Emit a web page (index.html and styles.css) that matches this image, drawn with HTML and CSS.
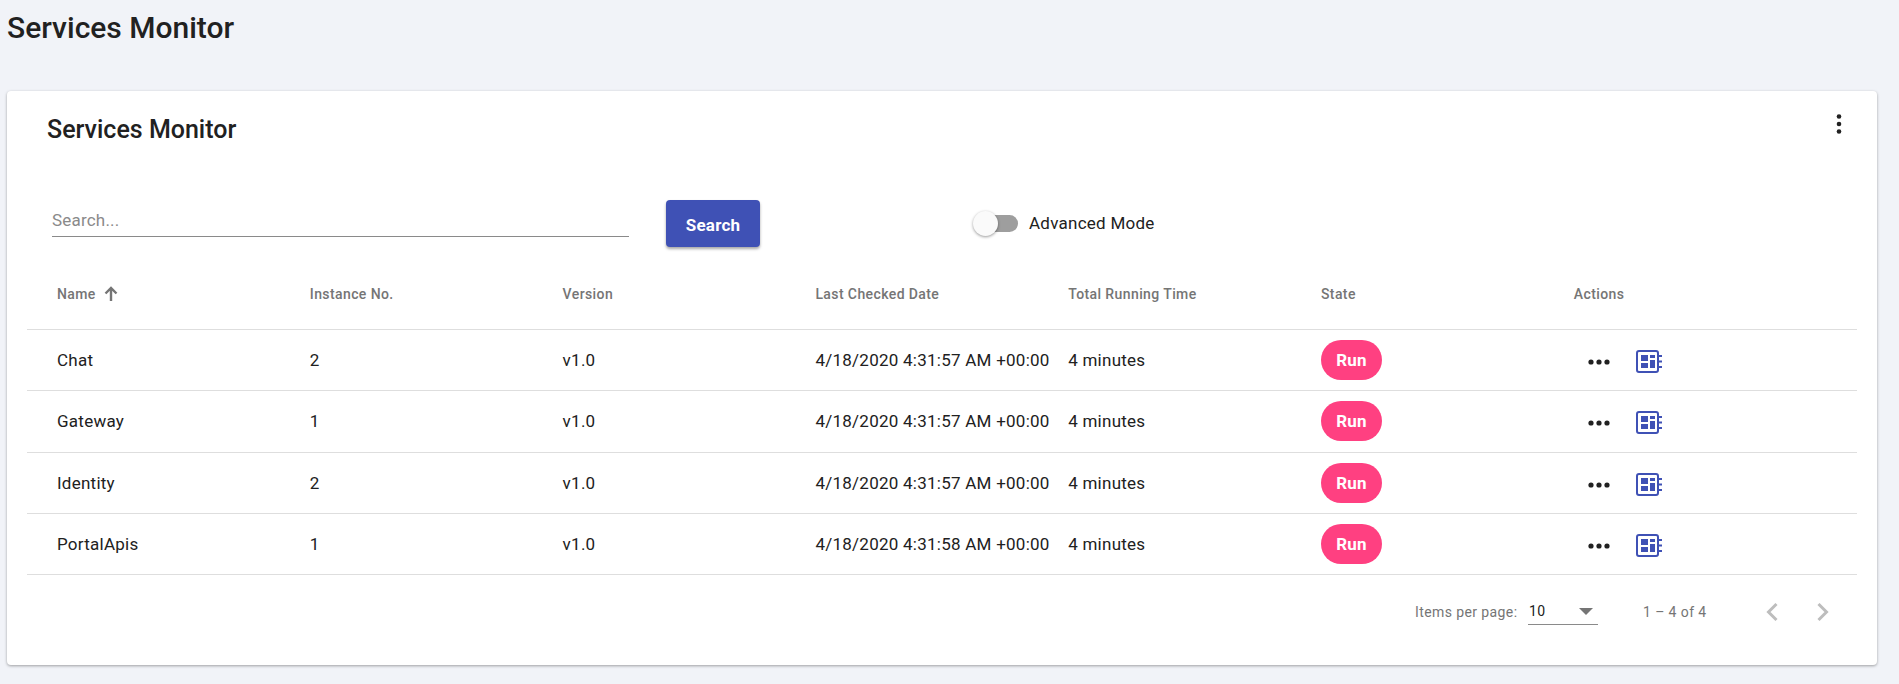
FILE: index.html
```html
<!DOCTYPE html>
<html lang="en">
<head>
    <meta charset="UTF-8">
    <meta name="viewport" content="width=device-width, initial-scale=1.0">
    <title>Services Monitor</title>
    <link rel="stylesheet" href="styles.css">
</head>
<body>
    <h1 class="page-title">Services Monitor</h1>
    <div class="card">
        <div class="card-head">
            <h2 class="card-title">Services Monitor</h2>
            <svg class="kebab" width="6" height="20" viewBox="0 0 6 20"><circle cx="3" cy="2.5" r="2.3"/><circle cx="3" cy="10" r="2.3"/><circle cx="3" cy="17.5" r="2.3"/></svg>
        </div>
        <div class="filters">
            <div class="search-box"><span class="placeholder">Search...</span></div>
            <button class="search-btn">Search</button>
            <div class="toggle">
                <span class="track"><span class="thumb"></span></span>
                <span class="toggle-label">Advanced Mode</span>
            </div>
        </div>
        <div class="table">
            <div class="row head">
                <div class="name-head">Name
                    <svg width="18" height="18" viewBox="0 0 18 18"><path d="M9 16V3M3.500 8.500 9 3l5.500 5.500" fill="none" stroke="#757575" stroke-width="2.400"/></svg>
                </div>
                <div>Instance No.</div>
                <div>Version</div>
                <div>Last Checked Date</div>
                <div>Total Running Time</div>
                <div>State</div>
                <div>Actions</div>
            </div>
            <div class="row">
                <div>Chat</div><div>2</div><div>v1.0</div><div>4/18/2020 4:31:57 AM +00:00</div><div>4 minutes</div>
                <div><button class="run">Run</button></div>
                <div class="actions">
                    <svg class="dots" width="22" height="6" viewBox="0 0 22 6"><circle cx="3" cy="3" r="2.6"/><circle cx="11" cy="3" r="2.6"/><circle cx="19" cy="3" r="2.6"/></svg>
                    <svg class="board" width="26" height="24" viewBox="0 0 26 24"><rect x="1" y="1" width="21" height="21" rx="2" fill="none" stroke="#3f51b5" stroke-width="2"/><path d="M23 5h3v2h-3zM23 10.500h3v2h-3zM23 16h3v2h-3zM5 5h7v6H5zM14 5h5v3h-5zM5 13h7v5H5zM14 10h5v8h-5z" fill="#3f51b5"/></svg>
                </div>
            </div>
            <div class="row">
                <div>Gateway</div><div>1</div><div>v1.0</div><div>4/18/2020 4:31:57 AM +00:00</div><div>4 minutes</div>
                <div><button class="run">Run</button></div>
                <div class="actions">
                    <svg class="dots" width="22" height="6" viewBox="0 0 22 6"><circle cx="3" cy="3" r="2.6"/><circle cx="11" cy="3" r="2.6"/><circle cx="19" cy="3" r="2.6"/></svg>
                    <svg class="board" width="26" height="24" viewBox="0 0 26 24"><rect x="1" y="1" width="21" height="21" rx="2" fill="none" stroke="#3f51b5" stroke-width="2"/><path d="M23 5h3v2h-3zM23 10.500h3v2h-3zM23 16h3v2h-3zM5 5h7v6H5zM14 5h5v3h-5zM5 13h7v5H5zM14 10h5v8h-5z" fill="#3f51b5"/></svg>
                </div>
            </div>
            <div class="row">
                <div>Identity</div><div>2</div><div>v1.0</div><div>4/18/2020 4:31:57 AM +00:00</div><div>4 minutes</div>
                <div><button class="run">Run</button></div>
                <div class="actions">
                    <svg class="dots" width="22" height="6" viewBox="0 0 22 6"><circle cx="3" cy="3" r="2.6"/><circle cx="11" cy="3" r="2.6"/><circle cx="19" cy="3" r="2.6"/></svg>
                    <svg class="board" width="26" height="24" viewBox="0 0 26 24"><rect x="1" y="1" width="21" height="21" rx="2" fill="none" stroke="#3f51b5" stroke-width="2"/><path d="M23 5h3v2h-3zM23 10.500h3v2h-3zM23 16h3v2h-3zM5 5h7v6H5zM14 5h5v3h-5zM5 13h7v5H5zM14 10h5v8h-5z" fill="#3f51b5"/></svg>
                </div>
            </div>
            <div class="row">
                <div>PortalApis</div><div>1</div><div>v1.0</div><div>4/18/2020 4:31:58 AM +00:00</div><div>4 minutes</div>
                <div><button class="run">Run</button></div>
                <div class="actions">
                    <svg class="dots" width="22" height="6" viewBox="0 0 22 6"><circle cx="3" cy="3" r="2.6"/><circle cx="11" cy="3" r="2.6"/><circle cx="19" cy="3" r="2.6"/></svg>
                    <svg class="board" width="26" height="24" viewBox="0 0 26 24"><rect x="1" y="1" width="21" height="21" rx="2" fill="none" stroke="#3f51b5" stroke-width="2"/><path d="M23 5h3v2h-3zM23 10.500h3v2h-3zM23 16h3v2h-3zM5 5h7v6H5zM14 5h5v3h-5zM5 13h7v5H5zM14 10h5v8h-5z" fill="#3f51b5"/></svg>
                </div>
            </div>
        </div>
        <div class="pager">
            <span class="per-page">Items per page:</span>
            <div class="page-select"><span>10</span><span class="arrow"></span></div>
            <span class="range">1 – 4 of 4</span>
            <svg class="chev" width="14" height="20" viewBox="0 0 14 20"><path d="M11.500 2 3.500 10l8 8" fill="none" stroke="#bdbdbd" stroke-width="3"/></svg>
            <svg class="chev next" width="14" height="20" viewBox="0 0 14 20"><path d="M2.500 2l8 8-8 8" fill="none" stroke="#bdbdbd" stroke-width="3"/></svg>
        </div>
    </div>
</body>
</html>
```

FILE: styles.css
```css
*{
    margin: 0px;
    padding: 0px;
    box-sizing: border-box;
}
html,body{
    height: 684px;
    overflow: hidden;
}
body{
    background-color: #f1f3f8;
    font-family: Roboto, "Liberation Sans", sans-serif;
    color: #212121;
    padding: 0px 22px 0px 7px;
}
.page-title{
    font-size: 30px;
    font-weight: 500;
    line-height: 56px;
    height: 91px;
}
.card{
    height: 574px;
    background-color: white;
    border-radius: 4px;
    box-shadow: 0px 1px 3px rgba(0,0,0,0.35);
    padding: 0px 20px;
}
.card-head{
    display: flex;
    justify-content: space-between;
    height: 109px;
    padding: 23px 0px 0px 20px;
}
.card-title{
    font-size: 25px;
    font-weight: 500;
    line-height: 32px;
}
.kebab{
    fill: #212121;
    margin: 0px 15px 0px 0px;
}
.filters{
    display: flex;
    align-items: flex-start;
    height: 59px;
    padding-left: 25px;
}
.search-box{
    width: 577px;
    height: 37px;
    border-bottom: 1px solid #8a8a8a;
    padding-top: 10px;
    line-height: 20px;
}
.placeholder{
    color: #8a8a8a;
    font-size: 17px;
    letter-spacing: 0.2px;
}
.search-btn{
    margin-left: 37px;
    width: 94px;
    height: 47px;
    background-color: #3f51b5;
    color: white;
    border: none;
    border-radius: 4px;
    font-family: inherit;
    font-size: 17px;
    font-weight: 700;
    letter-spacing: 0.2px;
    padding-top: 2px;
    box-shadow: 0px 2px 3px rgba(0,0,0,0.35);
}
.toggle{
    display: flex;
    align-items: center;
    margin-left: 218px;
    height: 46px;
}
.track{
    position: relative;
    display: block;
    width: 40px;
    height: 17px;
    background-color: #9e9e9e;
    border-radius: 9px;
}
.thumb{
    position: absolute;
    left: -5px;
    top: -4px;
    width: 25px;
    height: 25px;
    border-radius: 50%;
    background-color: #fafafa;
    box-shadow: 0px 1px 3px rgba(0,0,0,0.4);
}
.toggle-label{
    font-size: 17px;
    letter-spacing: 0.25px;
    margin-left: 11px;
}
.row{
    display: grid;
    grid-template-columns: repeat(6, 252.8px) 1fr;
    align-items: center;
    padding-left: 30px;
    height: 61.25px;
    border-bottom: 1px solid #dedede;
    font-size: 17px;
    letter-spacing: 0.25px;
}
.row.head{
    height: 71px;
    font-size: 14px;
    font-weight: 500;
    letter-spacing: 0.4px;
    color: #757575;
}
.name-head{
    display: flex;
    align-items: center;
    gap: 6px;
}
.run{
    width: 61px;
    height: 40px;
    background-color: #ff4081;
    color: white;
    border: none;
    border-radius: 20px;
    font-family: inherit;
    font-size: 17px;
    font-weight: 700;
    letter-spacing: 0.2px;
}
.actions{
    display: flex;
    align-items: center;
    gap: 26px;
    padding: 4px 0px 0px 14px;
    letter-spacing: 0px;
}
.dots{
    fill: #212121;
}
.pager{
    display: flex;
    align-items: center;
    height: 73px;
    padding-left: 1388px;
    font-size: 14px;
    letter-spacing: 0.4px;
    color: #757575;
}
.per-page{
    width: 113px;
}
.page-select{
    display: flex;
    justify-content: space-between;
    align-items: center;
    width: 70px;
    height: 26px;
    border-bottom: 1px solid #8a8a8a;
    color: #212121;
    padding: 0px 5px 0px 1px;
}
.arrow{
    width: 0px;
    height: 0px;
    border-left: 7px solid transparent;
    border-right: 7px solid transparent;
    border-top: 7px solid #757575;
}
.range{
    margin-left: 45px;
    width: 122px;
}
.chev.next{
    margin-left: 37px;
}
```
